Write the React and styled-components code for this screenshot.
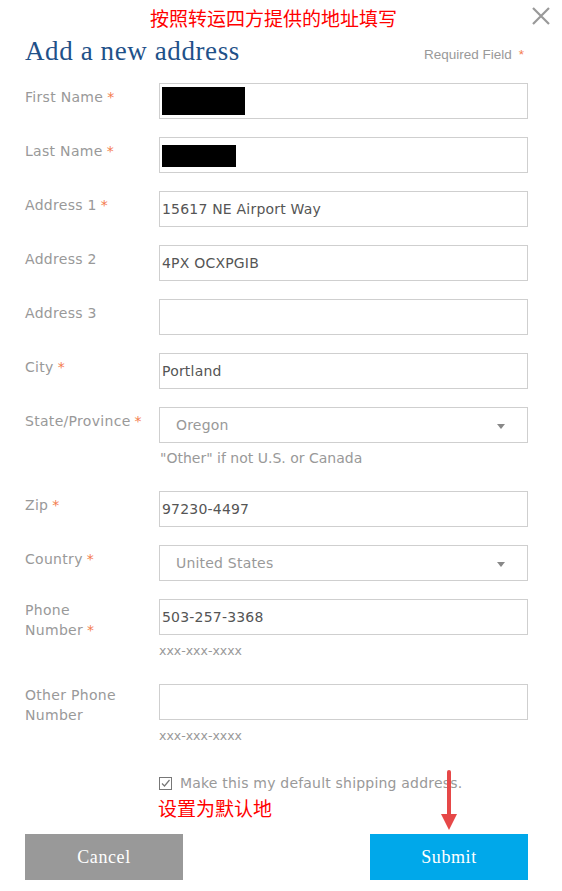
import styled, { createGlobalStyle } from "styled-components";

const GlobalStyle = createGlobalStyle`
  body {
    margin: 0;
    background: #fff;
    font-family: "DejaVu Sans", "Liberation Sans", sans-serif;
  }
`;

const StyledPage = styled.div`
  position: relative;
  width: 562px;
  height: 891px;
  box-sizing: border-box;
  padding: 0 34px 0 25px;
  overflow: hidden;
`;
const StyledTopBar = styled.div`
  display: flex;
  align-items: center;
  justify-content: space-between;
  height: 35px;
  margin-right: -30px;
`;
const StyledNote = styled.div`
  color: #ff0000;
  font-family: "Noto Sans CJK SC", sans-serif;
  font-size: 19px;
  line-height: 1;
  padding-left: 125px;
  margin-top: 0;
`;
const StyledClose = styled.button`
  border: 0;
  background: none;
  padding: 0;
  width: 20px;
  height: 20px;
  margin-right: 7px;
  margin-top: -3px;
  cursor: pointer;
`;
const StyledHeading = styled.div`
  display: flex;
  align-items: baseline;
  justify-content: space-between;
  margin-bottom: 16px;

  h2 {
    margin: 0;
    font-family: "Liberation Serif", serif;
    font-weight: 400;
    font-size: 27px;
    line-height: 32px;
    color: #1f5189;
    letter-spacing: 0.6px;
  }

  span {
    font-family: "Liberation Sans", sans-serif;
    font-size: 13.5px;
    color: #999;
    margin-right: 4px;
    position: relative;
    top: -1px;
  }

  b {
    color: #f47b4d;
    font-weight: 400;
    margin-left: 7px;
  }
`;
const StyledForm = styled.div`
  display: flex;
  flex-direction: column;
  gap: 18px;
`;
const StyledRow = styled.div`
  display: grid;
  grid-template-columns: 134px 369px;
  align-items: start;
`;
const StyledLabel = styled.label`
  font-size: 14px;
  letter-spacing: 0.3px;
  line-height: 20px;
  color: #999;
  padding-top: 4px;
  margin-top: ${(p) => (p.$wrap ? "-3px" : "0")};
  width: 100px;

  i {
    font-style: normal;
    color: #f47b4d;
    margin-left: 4px;
  }
`;
const StyledField = styled.div`
  display: flex;
  flex-direction: column;
`;
const StyledInput = styled.div`
  position: relative;
  height: 36px;
  box-sizing: border-box;
  border: 1px solid #cfcfcf;
  display: flex;
  align-items: center;
  padding-left: ${(p) => (p.$select ? "16px" : "2px")};
  font-size: 14px;
  letter-spacing: 0.2px;
  color: ${(p) => (p.$select ? "#999" : "#555")};
`;
const StyledRedact = styled.div`
  background: #000;
  width: ${(p) => p.$w}px;
  height: ${(p) => p.$h}px;
  margin-top: ${(p) => p.$t}px;
`;
const StyledCaret = styled.span`
  position: absolute;
  right: 22px;
  top: 16px;
  border-left: 4px solid transparent;
  border-right: 4px solid transparent;
  border-top: 5px solid #888;
`;
const StyledHint = styled.div`
  font-size: ${(p) => (p.$small ? "12.5px" : "14px")};
  color: #999;
  margin-top: ${(p) => (p.$small ? "8px" : "7px")};
  padding-left: ${(p) => (p.$small ? "0" : "1px")};
  height: 23px;
`;
const StyledCheckRow = styled.div`
  display: flex;
  align-items: center;
  gap: 8px;
  margin: 24px 0 0 134px;
  font-size: 14px;
  letter-spacing: 0.2px;
  color: #999;
`;
const StyledBox = styled.span`
  width: 13px;
  height: 13px;
  box-sizing: border-box;
  border: 1px solid #777;
  display: flex;
  align-items: center;
  justify-content: center;
`;
const StyledNote2 = styled.div`
  color: #ff0000;
  font-family: "Noto Sans CJK SC", sans-serif;
  font-size: 19px;
  margin: 4px 0 0 133px;
  line-height: 26px;
`;
const StyledButtons = styled.div`
  display: flex;
  justify-content: space-between;
  margin-top: 13px;
`;
const StyledButton = styled.button`
  width: 158px;
  height: 46px;
  border: 0;
  color: #fff;
  font-family: "Liberation Serif", serif;
  font-size: 18px;
  letter-spacing: 0.6px;
  background: ${(p) => (p.$primary ? "#00a8ea" : "#999")};
`;
const StyledArrow = styled.svg`
  position: absolute;
  left: 440px;
  top: 770px;
`;

const fields = [
  { label: "First Name", req: true, redact: [83, 28, 3] },
  { label: "Last Name", req: true, redact: [74, 22, 5] },
  { label: "Address 1", req: true, value: "15617 NE Airport Way" },
  { label: "Address 2", value: "4PX OCXPGIB" },
  { label: "Address 3", value: "" },
  { label: "City", req: true, value: "Portland" },
  { label: "State/Province", req: true, value: "Oregon", select: true, hint: '"Other" if not U.S. or Canada' },
  { label: "Zip", req: true, value: "97230-4497" },
  { label: "Country", req: true, value: "United States", select: true },
  { label: "Phone Number", req: true, wrap: true, value: "503-257-3368", hint: "xxx-xxx-xxxx", small: true },
  { label: "Other Phone Number", wrap: true, value: "", hint: "xxx-xxx-xxxx", small: true },
];

const App = () => {
  return (
    <StyledPage>
      <GlobalStyle />
      <StyledTopBar>
        <StyledNote>按照转运四方提供的地址填写</StyledNote>
        <StyledClose aria-label="Close">
          <svg width="20" height="20" viewBox="0 0 20 20">
            <path d="M2 2L18 18M18 2L2 18" stroke="#999" strokeWidth="2.2" />
          </svg>
        </StyledClose>
      </StyledTopBar>
      <StyledHeading>
        <h2>Add a new address</h2>
        <span>
          Required Field<b>*</b>
        </span>
      </StyledHeading>
      <StyledForm>
        {fields.map((f) => (
          <StyledRow key={f.label}>
            <StyledLabel $wrap={f.wrap}>
              {f.label}
              {f.req && <i>*</i>}
            </StyledLabel>
            <StyledField>
              <StyledInput $select={f.select}>
                {f.redact ? (
                  <StyledRedact $w={f.redact[0]} $h={f.redact[1]} $t={f.redact[2] - 4} />
                ) : (
                  f.value
                )}
                {f.select && <StyledCaret />}
              </StyledInput>
              {f.hint && <StyledHint $small={f.small}>{f.hint}</StyledHint>}
            </StyledField>
          </StyledRow>
        ))}
      </StyledForm>
      <StyledCheckRow>
        <StyledBox>
          <svg width="11" height="11" viewBox="0 0 11 11">
            <path d="M2 5.5L4.5 8L9.5 2" fill="none" stroke="#777" strokeWidth="1.2" />
          </svg>
        </StyledBox>
        Make this my default shipping address.
      </StyledCheckRow>
      <StyledNote2>设置为默认地</StyledNote2>
      <StyledButtons>
        <StyledButton>Cancel</StyledButton>
        <StyledButton $primary>Submit</StyledButton>
      </StyledButtons>
      <StyledArrow width="18" height="62" viewBox="0 0 18 62">
        <path d="M9 2V46" stroke="#e64848" strokeWidth="4" strokeLinecap="round" />
        <path d="M1 44L9 60L17 44Z" fill="#e64848" />
      </StyledArrow>
    </StyledPage>
  );
};

export default App;
